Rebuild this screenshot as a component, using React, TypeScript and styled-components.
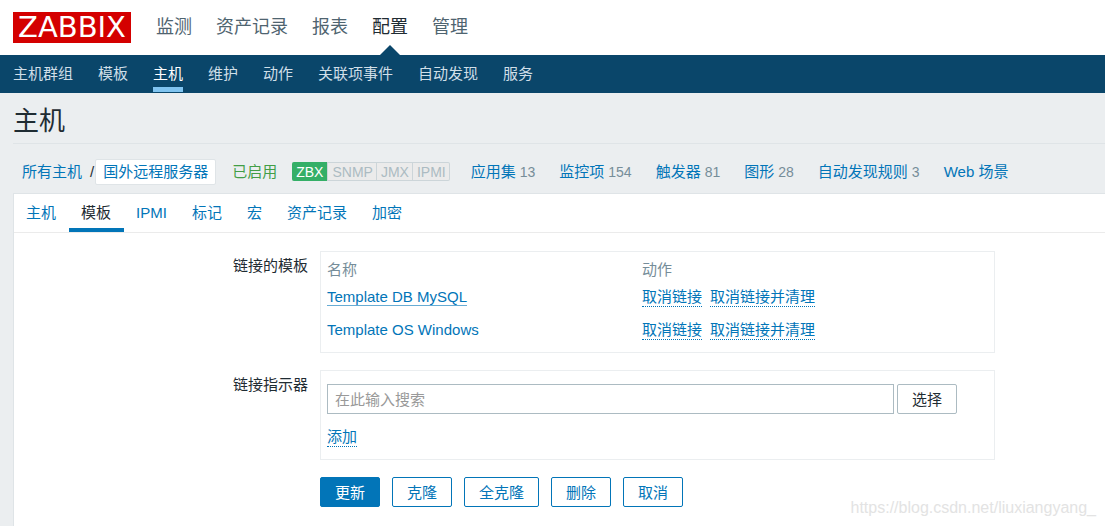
import React from "react";
import styled, { createGlobalStyle, css } from "styled-components";

const GlobalStyle = createGlobalStyle`
  *, *::before, *::after { box-sizing: border-box; }
  body {
    margin: 0;
    background: #ebeef0;
    color: #1f2c33;
    font-family: "Liberation Sans", Arial, "Noto Sans CJK SC", sans-serif;
    font-size: 15px;
    line-height: 20px;
  }
  button, input { font: inherit; }
  a { text-decoration: none; }
  ul { list-style: none; margin: 0; padding: 0; }
`;

const Page = styled.div`
  position: relative;
  display: flex;
  flex-direction: column;
  min-height: 100vh;
`;

const TopBar = styled.header`
  display: flex;
  align-items: center;
  gap: 25px;
  height: 55px;
  padding: 0 13px;
  background: #fff;
`;

const Logo = styled.a`
  width: 118px;
  height: 31px;
  background: #d40000;
  color: #fff;
  font-family: "DejaVu Sans", sans-serif;
  font-size: 29px;
  line-height: 31px;
  text-align: center;
`;

const TopMenu = styled.ul`
  display: flex;
  gap: 24px;
  height: 100%;
`;

const TopLink = styled.a<{ $active?: boolean }>`
  position: relative;
  display: block;
  font-size: 18px;
  line-height: 54px;
  height: 55px;
  color: ${(p) => (p.$active ? "#1f2c33" : "#4f6470")};
  ${(p) =>
    p.$active &&
    css`
      &::after {
        content: "";
        position: absolute;
        left: 50%;
        bottom: 0;
        margin-left: -10px;
        border: 10px solid transparent;
        border-top: 0;
        border-bottom-color: #0a466a;
      }
    `}
`;

const SubMenu = styled.ul`
  display: flex;
  gap: 25px;
  height: 38px;
  padding: 0 13px;
  background: #0a466a;
`;

const SubLink = styled.a<{ $active?: boolean }>`
  display: block;
  height: 37px;
  line-height: 37px;
  color: ${(p) => (p.$active ? "#fff" : "#d0dfe8")};
  box-shadow: ${(p) => (p.$active ? "inset 0 -5px #80c4f0" : "none")};
`;

const Main = styled.main`
  display: flex;
  flex-direction: column;
  flex: 1;
  padding-left: 13px;
`;

const Title = styled.h1`
  margin: 0;
  height: 51px;
  font-size: 26px;
  font-weight: 400;
  line-height: 56px;
  border-bottom: 1px solid #dfe4e7;
`;

const HostBar = styled.div`
  display: flex;
  align-items: center;
  height: 49px;
  padding: 7px 0 0 9px;
  white-space: nowrap;
`;

const Link = styled.a`
  color: #0275b8;
`;

const Slash = styled.span`
  margin: 0 1px 0 8px;
`;

const CurrentHost = styled.a`
  padding: 2px 7px;
  border: 1px solid #dfe4e7;
  border-radius: 2px;
  background: #fff;
  color: #0275b8;
`;

const Enabled = styled.span`
  margin: 0 15px 0 16px;
  color: #429e47;
`;

const Interfaces = styled.ul`
  display: flex;
  height: 19px;
  margin: 0 21px 2px 0;
  border: 1px solid #ccd5d9;
  border-left: 0;
  border-radius: 2px;
  background: #ebebeb;
  color: #acbbc2;
  font-size: 14px;
  line-height: 18px;
`;

const Interface = styled.li<{ $on?: boolean }>`
  padding: 0 3px 0 4px;
  & + & { border-left: 1px solid #ccd5d9; }
  ${(p) =>
    p.$on &&
    css`
      margin: -1px 0;
      padding: 1px 4px;
      border-radius: 2px 0 0 2px;
      background: #34af67;
      color: #fff;
    `}
`;

const HostLinks = styled.ul`
  display: flex;
  gap: 24px;
`;

const Count = styled.sup`
  margin-left: 4px;
  color: #768d99;
  font-size: 14px;
  line-height: 20px;
  vertical-align: baseline;
`;

const Panel = styled.section`
  flex: 1;
  background: #fff;
  border: solid #dfe4e7;
  border-width: 1px 0 0 1px;
`;

const Tabs = styled.ul`
  display: flex;
  height: 39px;
  border-bottom: 1px solid #ebebeb;
`;

const Tab = styled.a<{ $active?: boolean }>`
  display: block;
  height: 38px;
  padding: 0 13px 0 12px;
  line-height: 37px;
  color: ${(p) => (p.$active ? "#1f2c33" : "#0275b8")};
  box-shadow: ${(p) => (p.$active ? "inset 0 -4px #0275b8" : "none")};
`;

const Form = styled.form`
  display: grid;
  grid-template-columns: minmax(80px, 294px) minmax(0, 675px);
  column-gap: 12px;
  row-gap: 17px;
  padding: 18px 12px 18px 0;
`;

const FieldLabel = styled.label`
  padding-top: 5px;
  text-align: right;
`;

const Box = styled.div`
  padding: 6px 6px 5px;
  border: 1px solid #ebeef0;
`;

const Table = styled.table`
  width: 100%;
  table-layout: fixed;
  border-collapse: collapse;
  th, td { padding: 0; text-align: left; font-weight: 400; }
  th { height: 23px; color: #768d99; }
  td { height: 33px; }
  th:first-child { width: 315px; }
`;

const NameLink = styled.a<{ $hover?: boolean }>`
  display: block;
  width: fit-content;
  padding-bottom: 1px;
  line-height: 15px;
  color: #0275b8;
  border-bottom: 1px solid ${(p) => (p.$hover ? "#67acd4" : "transparent")};
`;

const Actions = styled.div`
  display: flex;
  gap: 8px;
`;

const DottedButton = styled.button`
  padding: 0;
  border: 0;
  border-bottom: 1px dotted #0275b8;
  background: none;
  color: #0275b8;
  line-height: 18px;
  cursor: pointer;
`;

const SearchBox = styled(Box)`
  padding: 13px 6px 12px;
`;

const SearchRow = styled.div`
  display: flex;
  gap: 3px;
  padding-right: 31px;
  margin-bottom: 13px;
`;

const SearchInput = styled.input`
  flex: 1;
  min-width: 0;
  height: 30px;
  padding: 0 7px;
  border: 1px solid #acbbc2;
  border-radius: 0;
  background: #fff;
  color: #1f2c33;
  &::placeholder { color: #999; opacity: 1; }
`;

const Button = styled.button<{ $kind?: "primary" | "neutral" }>`
  height: 30px;
  padding: 2px 14px 0;
  border: 1px solid ${(p) => (p.$kind === "neutral" ? "#acbbc2" : "#0275b8")};
  border-radius: 2px;
  background: ${(p) => (p.$kind === "primary" ? "#0275b8" : "#fff")};
  color: ${(p) => (p.$kind === "primary" ? "#fff" : p.$kind === "neutral" ? "#1f2c33" : "#0275b8")};
  line-height: 26px;
  white-space: nowrap;
  cursor: pointer;
`;

const Footer = styled.div`
  grid-column: 2;
  display: flex;
  gap: 12px;
`;

const Watermark = styled.span`
  position: absolute;
  right: 9px;
  bottom: 8px;
  color: #e3e3e3;
  font-size: 16px;
`;

const topMenu = ["监测", "资产记录", "报表", "配置", "管理"];
const subMenu = ["主机群组", "模板", "主机", "维护", "动作", "关联项事件", "自动发现", "服务"];
const hostLinks: { label: string; count?: number }[] = [
  { label: "应用集", count: 13 },
  { label: "监控项", count: 154 },
  { label: "触发器", count: 81 },
  { label: "图形", count: 28 },
  { label: "自动发现规则", count: 3 },
  { label: "Web 场景" },
];
const tabs = ["主机", "模板", "IPMI", "标记", "宏", "资产记录", "加密"];
const templates = ["Template DB MySQL", "Template OS Windows"];

export default function App() {
  return (
    <Page>
      <GlobalStyle />
      <TopBar>
        <Logo href="#">ZABBIX</Logo>
        <nav>
          <TopMenu>
            {topMenu.map((t) => (
              <li key={t}>
                <TopLink href="#" $active={t === "配置"}>{t}</TopLink>
              </li>
            ))}
          </TopMenu>
        </nav>
      </TopBar>
      <nav>
        <SubMenu>
          {subMenu.map((t) => (
            <li key={t}>
              <SubLink href="#" $active={t === "主机"}>{t}</SubLink>
            </li>
          ))}
        </SubMenu>
      </nav>
      <Main>
        <Title>主机</Title>
        <HostBar>
          <Link href="#">所有主机</Link>
          <Slash>/</Slash>
          <CurrentHost href="#">国外远程服务器</CurrentHost>
          <Enabled>已启用</Enabled>
          <Interfaces>
            {["ZBX", "SNMP", "JMX", "IPMI"].map((t) => (
              <Interface key={t} $on={t === "ZBX"}>{t}</Interface>
            ))}
          </Interfaces>
          <HostLinks>
            {hostLinks.map(({ label, count }) => (
              <li key={label}>
                <Link href="#">{label}</Link>
                {count !== undefined && <Count>{count}</Count>}
              </li>
            ))}
          </HostLinks>
        </HostBar>
        <Panel>
          <Tabs>
            {tabs.map((t) => (
              <li key={t}>
                <Tab href="#" $active={t === "模板"}>{t}</Tab>
              </li>
            ))}
          </Tabs>
          <Form onSubmit={(e) => e.preventDefault()}>
            <FieldLabel as="span" id="linked-label">链接的模板</FieldLabel>
            <Box>
              <Table aria-labelledby="linked-label">
                <thead>
                  <tr>
                    <th>名称</th>
                    <th>动作</th>
                  </tr>
                </thead>
                <tbody>
                  {templates.map((t, i) => (
                    <tr key={t}>
                      <td>
                        <NameLink href="#" $hover={i === 0}>{t}</NameLink>
                      </td>
                      <td>
                        <Actions>
                          <DottedButton type="button">取消链接</DottedButton>
                          <DottedButton type="button">取消链接并清理</DottedButton>
                        </Actions>
                      </td>
                    </tr>
                  ))}
                </tbody>
              </Table>
            </Box>
            <FieldLabel htmlFor="template-search">链接指示器</FieldLabel>
            <SearchBox>
              <SearchRow>
                <SearchInput id="template-search" type="text" placeholder="在此输入搜索" />
                <Button type="button" $kind="neutral">选择</Button>
              </SearchRow>
              <DottedButton type="button">添加</DottedButton>
            </SearchBox>
            <Footer>
              <Button type="submit" $kind="primary">更新</Button>
              <Button type="button">克隆</Button>
              <Button type="button">全克隆</Button>
              <Button type="button">删除</Button>
              <Button type="button">取消</Button>
            </Footer>
          </Form>
        </Panel>
      </Main>
      <Watermark>https://blog.csdn.net/liuxiangyang_</Watermark>
    </Page>
  );
}
